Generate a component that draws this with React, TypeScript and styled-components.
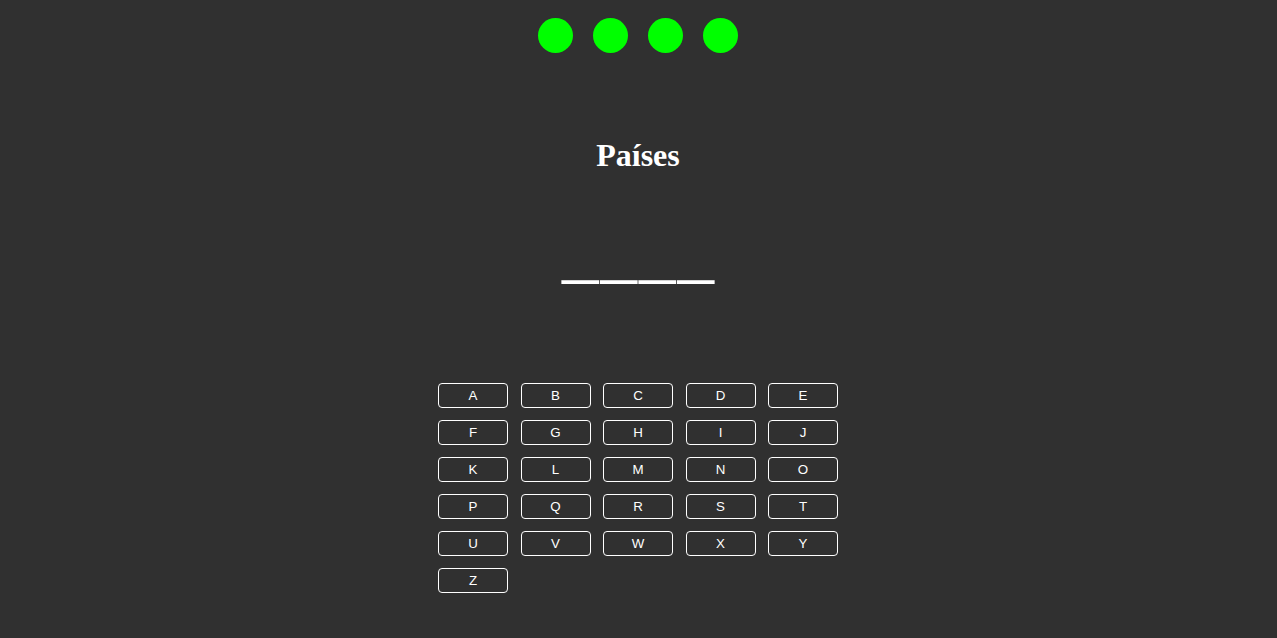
import React from "react";
import styled, { createGlobalStyle } from "styled-components";

const GlobalStyle = createGlobalStyle`
  html, body {
    margin: 0;
    padding: 0;
    background: #303030;
  }
  body {
    font-family: "Liberation Serif", "Times New Roman", serif;
    color: #ffffff;
  }
`;

const letters = "ABCDEFGHIJKLMNOPQRSTUVWXYZ".split("");

export default function App() {
  const lives = 4;
  const word = "____";
  return (
    <>
      <GlobalStyle />
      <Page>
        <Lives>
          {Array.from({ length: lives }).map((_, i) => (
            <Life key={i} />
          ))}
        </Lives>
        <Title>Países</Title>
        <Word>{word}</Word>
        <Keyboard>
          {letters.map((l) => (
            <Key key={l}>{l}</Key>
          ))}
        </Keyboard>
      </Page>
    </>
  );
}

//---------------------------------styled component-----------------------------------
const Page = styled.div`
  min-height: 638px;
  display: flex;
  flex-direction: column;
  align-items: center;
  padding-top: 18px;
  padding-right: 1px;
  box-sizing: border-box;
`;

const Lives = styled.div`
  display: flex;
  gap: 20px;
`;

const Life = styled.div`
  width: 35px;
  height: 35px;
  border-radius: 50%;
  background: #00ff00;
`;

const Title = styled.h1`
  font-size: 32px;
  font-weight: bold;
  margin: 84px 0 0;
  line-height: 37px;
`;

const Word = styled.div`
  font-size: 73px;
  letter-spacing: 2px;
  line-height: 80px;
  margin-top: 36px;
  padding-left: 2px;
`;

const Keyboard = styled.div`
  display: grid;
  grid-template-columns: repeat(5, 70px);
  column-gap: 12.5px;
  row-gap: 12px;
  margin-top: 93px;
`;

const Key = styled.button`
  width: 70px;
  height: 25px;
  background: transparent;
  border: 1px solid #ffffff;
  border-radius: 4px;
  color: #ffffff;
  font-family: "Liberation Sans", Arial, sans-serif;
  font-size: 13.333px;
  padding: 0;
  cursor: pointer;
`;
